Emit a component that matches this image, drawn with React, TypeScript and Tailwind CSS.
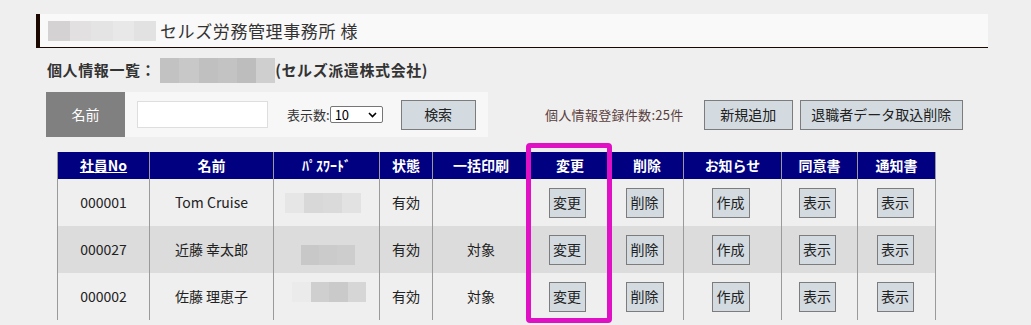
import type { JSX } from 'react';

const FONT = "font-['Meiryo','Noto_Sans_CJK_JP',sans-serif]";

interface Row {
  no: string;
  name: string;
  bulk: string;
  blur: { left: number; top: number; width: number; shades: string[] };
  bg: string;
}

const ROWS: Row[] = [
  { no: '000001', name: 'Tom Cruise', bulk: '', blur: { left: 11, top: 14, width: 76, shades: ['#e6e6e6', '#d8d8d8', '#dadada', '#e2e2e2'] }, bg: 'bg-[#efefef]' },
  { no: '000027', name: '近藤 幸太郎', bulk: '対象', blur: { left: 27, top: 19, width: 54, shades: ['#c8c8c8', '#cbcbcb', '#cdcdcd'] }, bg: 'bg-[#dcdcdc]' },
  { no: '000002', name: '佐藤 理恵子', bulk: '対象', blur: { left: 18, top: 9, width: 74, shades: ['#ebebeb', '#cfcfcf', '#cacaca', '#d6d6d6'] }, bg: 'bg-[#efefef]' },
];

const COLS: { label: string; w: string; underline?: boolean }[] = [
  { label: '社員No', w: 'w-[92px]', underline: true },
  { label: '名前', w: 'w-[124px]' },
  { label: 'ﾊﾟｽﾜｰﾄﾞ', w: 'w-[106px]' },
  { label: '状態', w: 'w-[53px]' },
  { label: '一括印刷', w: 'w-[97px]' },
  { label: '変更', w: 'w-[81px]' },
  { label: '削除', w: 'w-[73px]' },
  { label: 'お知らせ', w: 'w-[98px]' },
  { label: '同意書', w: 'w-[76px]' },
  { label: '通知書', w: 'w-[78px]' },
];

function Btn({ label, className = '' }: { label: string; className?: string }): JSX.Element {
  return (
    <button
      type="button"
      className={`h-[30px] border border-[#7c7c7c] bg-[#d3dbe1] text-[14px] text-[#222] ${className}`}
    >
      {label}
    </button>
  );
}

function Blur({ shades, h }: { shades: string[]; h: number }): JSX.Element {
  return (
    <div className="flex" style={{ height: h }}>
      {shades.map((c, i) => (
        <div key={i} className="flex-1" style={{ backgroundColor: c }} />
      ))}
    </div>
  );
}

export default function App(): JSX.Element {
  return (
    <div className={`relative h-[325px] overflow-hidden bg-[#efefef] pl-[36px] pt-[14px] text-[#222] ${FONT}`}>
      {/* page heading */}
      <div className="flex h-[34px] w-[952px] items-center border-b border-l-4 border-[#1a0800] bg-[#f9f9f9] pl-[8px]">
        <div className="w-[108px]">
          <Blur h={20} shades={['#d4d2d2', '#e2e0e0', '#e4e4e4', '#e8e8e8', '#e2e2e2']} />
        </div>
        <span className="ml-[4px] text-[17px] tracking-[0.6px] text-[#333]">セルズ労務管理事務所 様</span>
      </div>

      {/* list title */}
      <div className="flex h-[44px] items-center pl-[11px] text-[15px] font-bold tracking-[0.6px] text-[#333]">
        <span>個人情報一覧：</span>
        <div className="ml-[4px] w-[115px]">
          <Blur h={25} shades={['#c2c2c2', '#c8c8c8', '#c0c0c0', '#c3c3c3', '#bdbdbd', '#cfcfcf']} />
        </div>
        <span>(セルズ派遣株式会社)</span>
      </div>

      {/* search + actions */}
      <div className="ml-[10px] flex h-[45px] items-center">
        <div className="flex h-full w-[442px] items-center bg-[#f7f7f7]">
          <div className="flex h-full w-[79px] items-center justify-center bg-[#808080] text-[14px] text-white">名前</div>
          <input className="ml-[12px] h-[27px] w-[131px] border border-[#dedede] bg-white" />
          <span className="ml-[19px] text-[13px] text-[#333]">表示数:</span>
          <div className="flex h-[17px] w-[53px] items-center justify-between rounded-[2px] border border-[#767676] bg-white pl-[4px] pr-[5px] text-[13px] leading-none text-black">
            <span>10</span>
            <svg width="9" height="6" viewBox="0 0 9 6" aria-hidden="true">
              <path d="M1 1l3.5 3.5L8 1" fill="none" stroke="#000" strokeWidth="1.6" />
            </svg>
          </div>
          <Btn label="検索" className="ml-[18px] w-[75px]" />
        </div>
        <span className="ml-[57px] text-[13px] tracking-[0.3px] text-[#5a4040]">個人情報登録件数:25件</span>
        <Btn label="新規追加" className="ml-[20px] w-[89px]" />
        <Btn label="退職者データ取込削除" className="ml-[7px] w-[163px]" />
      </div>

      {/* table */}
      <table className="ml-[21px] mt-[15px] border-collapse text-[14px]">
        <thead>
          <tr className="h-[27px] bg-[#000080] text-white">
            {COLS.map((c) => (
              <th key={c.label} className={`${c.w} border-x border-[#9a9a9a] p-0 text-[14px] font-bold`}>
                <span className={c.underline ? 'underline' : ''}>{c.label}</span>
              </th>
            ))}
          </tr>
        </thead>
        <tbody>
          {ROWS.map((r) => (
            <tr key={r.no} className={`h-[47px] ${r.bg}`}>
              <td className="border-x border-[#9a9a9a] text-center">{r.no}</td>
              <td className="border-x border-[#9a9a9a] text-center">{r.name}</td>
              <td className="relative border-x border-[#9a9a9a]">
                <div className="absolute" style={{ left: r.blur.left, top: r.blur.top, width: r.blur.width }}>
                  <Blur h={20} shades={r.blur.shades} />
                </div>
              </td>
              <td className="border-x border-[#9a9a9a] text-center">有効</td>
              <td className="border-x border-[#9a9a9a] text-center">{r.bulk}</td>
              <td className="border-x border-[#9a9a9a] text-center"><Btn label="変更" className="mr-[6px] w-[37px]" /></td>
              <td className="border-x border-[#9a9a9a] text-center"><Btn label="削除" className="mr-[5px] w-[38px]" /></td>
              <td className="border-x border-[#9a9a9a] text-center"><Btn label="作成" className="mr-[4px] w-[38px]" /></td>
              <td className="border-x border-[#9a9a9a] text-center"><Btn label="表示" className="mr-[5px] w-[37px]" /></td>
              <td className="border-x border-[#9a9a9a] text-center"><Btn label="表示" className="mr-[3px] w-[37px]" /></td>
            </tr>
          ))}
        </tbody>
      </table>

      {/* highlight overlay */}
      <div className="pointer-events-none absolute left-[526px] top-[143px] h-[180px] w-[86px] rounded-[4px] border-[5px] border-[#e010c4]" />
    </div>
  );
}
